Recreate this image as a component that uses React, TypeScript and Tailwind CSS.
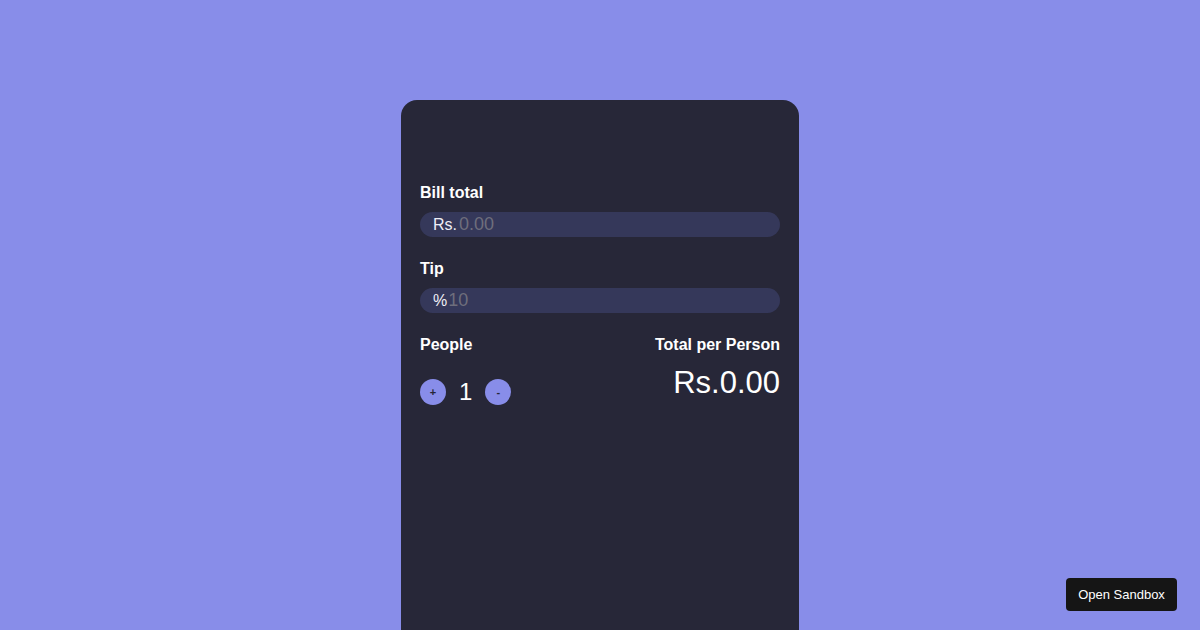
import { useState } from "react";

export default function App() {
  const [people, setPeople] = useState(1);

  return (
    <div
      className="relative w-[1200px] h-[630px] overflow-hidden bg-[#888de9]"
      style={{ fontFamily: '"Liberation Sans", Arial, sans-serif' }}
    >
      <div className="flex justify-center pt-[100px]">
        <div className="w-[398px] h-[600px] rounded-[16px] bg-[#272738] px-[19px] pt-[81px] text-white">
          {/* Bill total */}
          <label className="block font-bold text-[16px] leading-[24px]">Bill total</label>
          <div className="mt-[7px] flex items-center h-[25px] rounded-full bg-[#35385a] px-[13px]">
            <span className="text-[16px] text-[#eeeef5]">Rs.</span>
            <span className="ml-[2px] text-[18px] text-[#6e6e7c]">0.00</span>
          </div>

          {/* Tip */}
          <label className="block mt-[20px] font-bold text-[16px] leading-[24px]">Tip</label>
          <div className="mt-[7px] flex items-center h-[25px] rounded-full bg-[#35385a] px-[13px]">
            <span className="text-[16px] text-[#eeeef5]">%</span>
            <span className="ml-[1px] text-[18px] text-[#6e6e7c]">10</span>
          </div>

          <div className="mt-[20px] flex justify-between">
            <div>
              <div className="font-bold text-[16px] leading-[24px]">People</div>
              <div className="mt-[22px] flex items-center">
                <button
                  onClick={() => setPeople(people + 1)}
                  className="w-[26px] h-[26px] rounded-full bg-[#888de9] text-[#262637] text-[11px] font-bold flex items-center justify-center"
                >
                  +
                </button>
                <span className="mx-[13px] text-[24px] leading-[26px]">{people}</span>
                <button
                  onClick={() => setPeople(Math.max(1, people - 1))}
                  className="w-[26px] h-[26px] rounded-full bg-[#888de9] text-[#262637] text-[11px] font-bold flex items-center justify-center"
                >
                  -
                </button>
              </div>
            </div>
            <div className="text-right">
              <div className="font-bold text-[16px] leading-[24px]">Total per Person</div>
              <div className="mt-[6px] text-[31px] leading-[40px]">Rs.0.00</div>
            </div>
          </div>
        </div>
      </div>

      <button className="absolute right-[23px] bottom-[19px] w-[111px] h-[33px] rounded-[4px] bg-[#151515] text-white text-[13px]">
        Open Sandbox
      </button>
    </div>
  );
}
